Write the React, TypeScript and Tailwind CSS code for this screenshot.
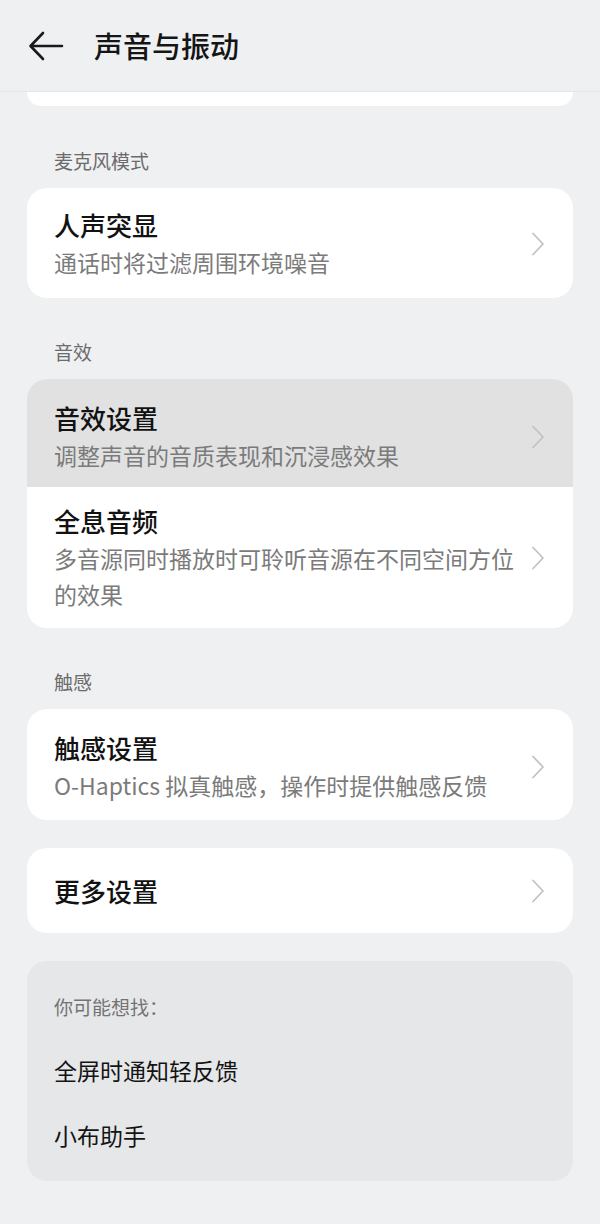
import type { ReactNode } from 'react';

const font = { fontFamily: '"Noto Sans CJK SC", "Noto Sans", sans-serif' };

const Chevron = () => (
  <svg width="16" height="26" viewBox="0 0 16 26" fill="none" className="shrink-0" aria-hidden>
    <path d="M3 2.5 L13 13 L3 23.5" stroke="#c2c2c4" strokeWidth="1.8" strokeLinecap="round" strokeLinejoin="round" />
  </svg>
);

const BackArrow = () => (
  <svg width="36" height="30" viewBox="0 0 36 30" fill="none" aria-hidden>
    <path d="M34 15 H3 M15 2 L2.5 15 L15 28" stroke="#1a1a1a" strokeWidth="2.6" strokeLinecap="round" strokeLinejoin="round" />
  </svg>
);

interface ItemProps {
  title: string;
  subtitle?: ReactNode;
  active?: boolean;
  className?: string;
}

const Item = ({ title, subtitle, active, className = '' }: ItemProps) => (
  <div
    className={`flex items-center justify-between gap-3 px-[27px] ${active ? 'bg-[#e1e1e2]' : ''} ${className}`}
  >
    <div className="min-w-0 flex-1">
      <p className="text-[26px] font-medium leading-[34px] text-[#121212]">{title}</p>
      {subtitle && (
        <p className="mt-[2px] text-[23px] leading-[36px] text-[#7b7b7b]">{subtitle}</p>
      )}
    </div>
    <Chevron />
  </div>
);

const SectionLabel = ({ children, className = '' }: { children: ReactNode; className?: string }) => (
  <p className={`px-[54px] text-[19px] leading-[26px] text-[#6b6b6b] ${className}`}>{children}</p>
);

export default function App() {
  return (
    <div className="min-h-[1224px] w-[600px] overflow-hidden bg-[#eff0f2]" style={font}>
      <header className="flex h-[92px] items-center gap-[30px] border-b border-[#e4e5e7] px-[28px]">
        <BackArrow />
        <h1 className="text-[29px] font-medium leading-none text-[#151515]">声音与振动</h1>
      </header>

      <div className="mx-[27px] h-[14px] rounded-b-[20px] bg-white" />

      <SectionLabel className="mt-[42px]">麦克风模式</SectionLabel>
      <div className="mx-[27px] mt-[14px] overflow-hidden rounded-[20px] bg-white">
        <Item title="人声突显" subtitle="通话时将过滤周围环境噪音" className="pt-[20px] pb-[18px]" />
      </div>

      <SectionLabel className="mt-[41px]">音效</SectionLabel>
      <div className="mx-[27px] mt-[14px] overflow-hidden rounded-[20px] bg-white">
        <Item title="音效设置" subtitle="调整声音的音质表现和沉浸感效果" active className="pt-[22px] pb-[14px]" />
        <Item
          title="全息音频"
          subtitle="多音源同时播放时可聆听音源在不同空间方位的效果"
          className="pt-[17px] pb-[16px]"
        />
      </div>

      <SectionLabel className="mt-[41px]">触感</SectionLabel>
      <div className="mx-[27px] mt-[14px] overflow-hidden rounded-[20px] bg-white">
        <Item title="触感设置" subtitle="O-Haptics 拟真触感，操作时提供触感反馈" className="pt-[22px] pb-[17px]" />
      </div>

      <div className="mx-[27px] mt-[28px] overflow-hidden rounded-[20px] bg-white">
        <Item title="更多设置" className="h-[85px]" />
      </div>

      <div className="mx-[27px] mt-[28px] rounded-[20px] bg-[#e6e7e9] px-[27px] pt-[33px] pb-[13px]">
        <p className="text-[19px] leading-[26px] text-[#737373]">你可能想找：</p>
        <div className="mt-[18px] flex flex-col">
          <p className="py-[14px] text-[23px] leading-[37px] text-[#141414]">全屏时通知轻反馈</p>
          <p className="py-[14px] text-[23px] leading-[37px] text-[#141414]">小布助手</p>
        </div>
      </div>
    </div>
  );
}
